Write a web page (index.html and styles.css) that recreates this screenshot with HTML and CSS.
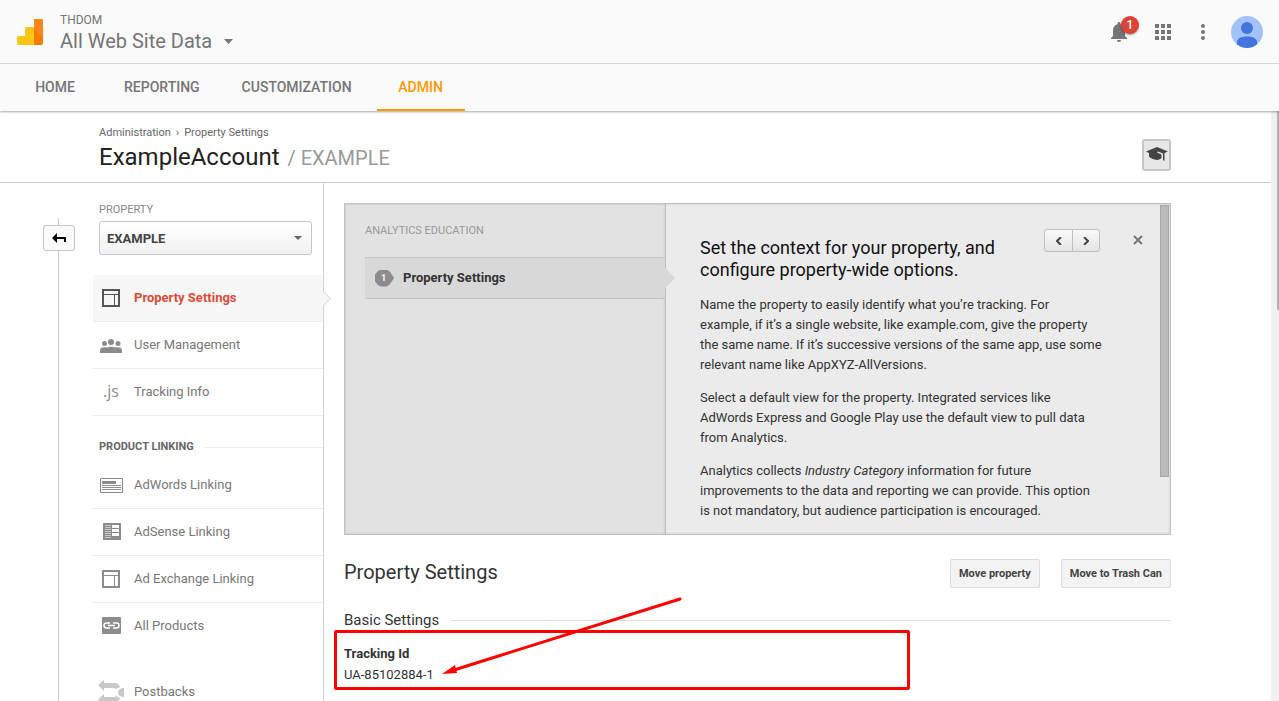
FILE: index.html
```html
<!DOCTYPE html>
<html lang="en">
<head>
<meta charset="utf-8">
<title>Property Settings</title>
<meta name="viewport" content="width=device-width, initial-scale=1">
<link rel="stylesheet" href="styles.css">
</head>
<body>
<header class="topbar">
  <svg class="logo" width="26" height="26" viewBox="0 0 26 26" aria-hidden="true">
    <path d="M17 0h7a2 2 0 0 1 2 2v22a2 2 0 0 1-2 2h-7z" fill="#f57c00"/>
    <path d="M17 2a2 2 0 0 1 2-2h5a2 2 0 0 1 2 2v16l-9-8z" fill="#f9851b"/>
    <path d="M17 8v18H2a2 2 0 0 1-2-2v-5a2 2 0 0 1 2-2h6v-7a2 2 0 0 1 2-2z" fill="#ffc517"/>
  </svg>
  <div class="view">
    <div class="view-account">THDOM</div>
    <button class="view-picker" type="button">All Web Site Data
      <svg width="9" height="5" viewBox="0 0 9 5" aria-hidden="true"><path d="M0 0h9L4.500 5z" fill="#757575"/></svg>
    </button>
  </div>
  <div class="tools">
    <button class="tool bell" type="button" aria-label="Notifications">
      <svg width="16" height="20" viewBox="0 0 16 20" aria-hidden="true"><path d="M8 0c-.9 0-1.500.7-1.500 1.500v.8C3.700 3 2 5.500 2 8.500V14l-2 2v1h16v-1l-2-2V8.500c0-3-1.700-5.500-4.500-6.200v-.8C9.500.7 8.900 0 8 0zM6 18a2 2 0 0 0 4 0z" fill="#757575"/></svg>
      <span class="badge">1</span>
    </button>
    <button class="tool" type="button" aria-label="Apps">
      <svg width="16" height="16" viewBox="0 0 16 16" aria-hidden="true"><path d="M0 0h4v4H0zM6 0h4v4H6zM12 0h4v4h-4zM0 6h4v4H0zM6 6h4v4H6zM12 6h4v4h-4zM0 12h4v4H0zM6 12h4v4H6zM12 12h4v4h-4z" fill="#757575"/></svg>
    </button>
    <button class="tool" type="button" aria-label="More">
      <svg width="4" height="16" viewBox="0 0 4 16" aria-hidden="true"><g fill="#757575"><circle cx="2" cy="2" r="2"/><circle cx="2" cy="8" r="2"/><circle cx="2" cy="14" r="2"/></g></svg>
    </button>
    <button class="tool" type="button" aria-label="Profile">
      <svg width="32" height="32" viewBox="0 0 32 32" aria-hidden="true"><circle cx="16" cy="16" r="16" fill="#a1c2fa"/><circle cx="16" cy="12" r="6" fill="#4274e0"/><path d="M6 28.500C5 23 9 20.500 16 20.500s11 2.500 10 8A16 16 0 0 1 6 28.500z" fill="#4274e0"/></svg>
    </button>
  </div>
</header>
<nav class="tabs">
  <a class="tab" href="#">HOME</a>
  <a class="tab" href="#">REPORTING</a>
  <a class="tab" href="#">CUSTOMIZATION</a>
  <a class="tab tab-active" href="#">ADMIN</a>
</nav>
<div class="viewport">
  <div class="page">
    <div class="page-head">
      <div>
        <div class="crumbs"><a href="#">Administration</a><span>›</span><a href="#">Property Settings</a></div>
        <h1 class="title">ExampleAccount <span class="title-sub">/ EXAMPLE</span></h1>
      </div>
      <button class="learn" type="button" aria-label="Analytics education">
        <svg width="22" height="14" viewBox="0 0 22 14" aria-hidden="true"><path d="M11 0L0 4.500L3 6v3.500C5 12 8 12.500 11 13c2-.3 3.500-1 4.500-2V7.500L11 5.500 12 4.500l5 2V13.500h1.500V6L22 4.500z" fill="#444"/></svg>
      </button>
    </div>
    <div class="columns">
      <div class="rail">
        <button class="rail-back" type="button" aria-label="Back">
          <svg width="14" height="10" viewBox="0 0 14 10" aria-hidden="true"><path d="M0 5l5-5v4h9v5h-2V6H5v4z" fill="#000"/></svg>
        </button>
      </div>
      <aside class="sidebar">
        <label class="prop-label" for="property">PROPERTY</label>
        <div class="prop-select">
          <select id="property"><option>EXAMPLE</option></select>
          <svg width="8" height="4" viewBox="0 0 8 4" aria-hidden="true"><path d="M0 0h8L4 4z" fill="#666"/></svg>
        </div>
        <a class="item item-active" href="#">
          <svg class="ico" width="26" height="24" viewBox="0 0 26 24" aria-hidden="true"><path d="M5 8.500h16M16.500 8v11" fill="none" stroke="#555" stroke-width="1"/><path d="M5 4h16v16H5z" fill="none" stroke="#555" stroke-width="2"/></svg>
          Property Settings</a>
        <a class="item" href="#">
          <svg class="ico" width="26" height="24" viewBox="0 0 26 24" aria-hidden="true"><g fill="#8c8c8c"><circle cx="6.500" cy="10.500" r="2.500"/><circle cx="13" cy="9" r="3"/><circle cx="20" cy="10.500" r="2.500"/><path d="M2 20v-3c0-2.500 4-3 7-2.500 2-1 6-1 8 0 3-.5 7 0 7 2.500v3z"/></g></svg>
          User Management</a>
        <a class="item" href="#"><span class="ico ico-js">.js</span>Tracking Info</a>
        <h2 class="group">PRODUCT LINKING</h2>
        <a class="item" href="#">
          <svg class="ico" width="26" height="24" viewBox="0 0 26 24" aria-hidden="true"><path d="M2.500 5.500h22v14h-22z" fill="none" stroke="#8c8c8c"/><path d="M4 8h14v3H4zM4 12h19v1H4zM4 14h19v1H4zM4 16h19v1H4z" fill="#8c8c8c"/></svg>
          AdWords Linking</a>
        <a class="item" href="#">
          <svg class="ico" width="26" height="24" viewBox="0 0 26 24" aria-hidden="true"><path d="M5 3h18v17H5z" fill="#8c8c8c"/><path d="M14 5h7v3h-7zM14 9h7v3h-7zM14 13h7v3h-7z" fill="#fff"/><path d="M7 5h6v1H7zM7 7h6v1H7zM7 9h6v1H7zM7 11h6v1H7zM7 13h6v1H7zM7 15h6v1H7zM7 17h6v1H7z" fill="#c8c8c8"/></svg>
          AdSense Linking</a>
        <a class="item" href="#">
          <svg class="ico" width="26" height="24" viewBox="0 0 26 24" aria-hidden="true"><path d="M5 8.500h16M16.500 8v11" fill="none" stroke="#8c8c8c" stroke-width="1"/><path d="M5 4h16v16H5z" fill="none" stroke="#8c8c8c" stroke-width="2"/></svg>
          Ad Exchange Linking</a>
        <a class="item item-last" href="#">
          <svg class="ico" width="26" height="24" viewBox="0 0 26 24" aria-hidden="true"><rect x="4" y="3" width="19" height="17" rx="1" fill="#8c8c8c"/><path d="M12 9H8.500a2.500 2.500 0 0 0 0 5H12M15 9h3.500a2.500 2.500 0 0 1 0 5H15M10 11.500h7" fill="none" stroke="#fff" stroke-width="1.500"/></svg>
          All Products</a>
        <a class="item item-last" href="#">
          <svg class="ico" width="26" height="24" viewBox="0 0 26 24" aria-hidden="true"><g fill="#c8c8c8"><path d="M0 5L6 0v3h11c3 0 4 2 5 4l-4 2-2-1H6v3z"/><path d="M0 19.500L6 14v3h10l2-1 4 2c-1 2-2 4-5 4H6v3z"/><path d="M26 8v9c-3 0-6-1.500-6-4.500S23 8 26 8z"/></g></svg>
          Postbacks</a>
      </aside>
      <main class="content">
        <section class="edu">
          <div class="edu-nav">
            <h2 class="edu-label">ANALYTICS EDUCATION</h2>
            <a class="edu-step" href="#">
              <span class="step-num">1</span>Property Settings</a>
          </div>
          <div class="edu-body">
            <div class="edu-top">
              <h3 class="edu-title">Set the context for your property, and configure property-wide options.</h3>
              <div class="edu-pager">
                <button type="button" aria-label="Previous"><svg width="6" height="8" viewBox="0 0 6 8" aria-hidden="true"><path d="M5 0L1 4l4 4" fill="none" stroke="#444" stroke-width="2"/></svg></button>
                <button type="button" aria-label="Next"><svg width="6" height="8" viewBox="0 0 6 8" aria-hidden="true"><path d="M1 0l4 4-4 4" fill="none" stroke="#444" stroke-width="2"/></svg></button>
              </div>
              <button class="edu-close" type="button" aria-label="Close"><svg width="10" height="10" viewBox="0 0 10 10" aria-hidden="true"><path d="M1 1l8 8M9 1L1 9" stroke="#777" stroke-width="2"/></svg></button>
            </div>
            <p>Name the property to easily identify what you’re tracking. For example, if it’s a single website, like example.com, give the property the same name. If it’s successive versions of the same app, use some relevant name like AppXYZ-AllVersions.</p>
            <p>Select a default view for the property. Integrated services like AdWords Express and Google Play use the default view to pull data from Analytics.</p>
            <p>Analytics collects <em>Industry Category</em> information for future improvements to the data and reporting we can provide. This option is not mandatory, but audience participation is encouraged.</p>
          </div>
          <div class="edu-scroll"></div>
        </section>
        <div class="section-head">
          <h2>Property Settings</h2>
          <button type="button">Move property</button>
          <button type="button">Move to Trash Can</button>
        </div>
        <h3 class="subhead">Basic Settings</h3>
        <div class="tracking">
          <div class="tracking-label">Tracking Id</div>
          <div>UA-85102884-1</div>
          <svg class="arrow" width="242" height="84" viewBox="0 0 242 84" aria-hidden="true"><path d="M12 75L238 4" stroke="#f00" stroke-width="3" stroke-linecap="round"/><path d="M0 79l13-9 2 8z" fill="#f00"/></svg>
        </div>
      </main>
    </div>
  </div>
  <div class="scrollbar"></div>
</div>
</body>
</html>
```
FILE: styles.css
```css
* { box-sizing: border-box; }
body {
  margin: 0;
  height: 100vh;
  display: flex;
  flex-direction: column;
  overflow: hidden;
  background: #fff;
  color: #333;
  font: 13px/20px Roboto, "Liberation Sans", sans-serif;
}
h1, h2, h3, p { margin: 0; font-weight: 400; }
a { color: inherit; text-decoration: none; }
button { margin: 0; padding: 0; border: 0; background: none; color: inherit; font: inherit; cursor: pointer; }
svg { display: block; flex: none; }

.topbar {
  flex: none;
  height: 64px;
  display: flex;
  align-items: center;
  padding: 0 16px 0 17px;
  border-bottom: 1px solid #dcdcdc;
  background: #fafafa;
  color: #757575;
}
.view { margin-left: 17px; padding-top: 3px; }
.view-account { font-size: 12px; line-height: 16px; }
.view-picker { display: flex; align-items: center; gap: 12px; font-size: 20px; line-height: 26px; }
.tools { margin-left: auto; display: flex; align-items: center; }
.tool { display: flex; justify-content: center; min-width: 40px; }
.tool:last-child { margin-left: 8px; min-width: 32px; }
.bell { position: relative; margin-right: 4px; }
.badge {
  position: absolute;
  top: -6px;
  right: 0;
  width: 18px;
  height: 18px;
  border-radius: 50%;
  background: #db4437;
  box-shadow: 0 1px 2px rgba(0, 0, 0, .4);
  color: #fff;
  font-size: 12px;
  font-weight: 500;
  line-height: 18px;
}

.tabs {
  flex: none;
  position: relative;
  z-index: 1;
  height: 47px;
  display: flex;
  gap: 8px;
  padding-left: 11px;
  background: #fafafa;
  box-shadow: 0 1px 2px rgba(0, 0, 0, .35);
  color: #757575;
  font-size: 14px;
  font-weight: 500;
}
.tab {
  min-width: 88px;
  padding: 0 17px;
  line-height: 47px;
  text-align: center;
}
.tab-active { border-bottom: 2px solid #ff9800; color: #ff9800; }

.viewport { flex: 1; min-height: 0; display: flex; }
.page { flex: 1; min-width: 0; display: flex; flex-direction: column; overflow: hidden; }
.scrollbar { width: 8px; background: linear-gradient(#b0b0b0, #b0b0b0) right top / 2px 199px no-repeat #f1f1f1; }

.page-head {
  flex: none;
  height: 72px;
  display: flex;
  justify-content: space-between;
  align-items: flex-end;
  padding: 0 100px 8px 99px;
  border-bottom: 1px solid #ccc;
}
.crumbs { display: flex; gap: 5px; color: #666; font-size: 11px; line-height: 16px; }
.title { color: #222; font-size: 24px; line-height: 32px; }
.title-sub { color: #999; font-size: 20px; margin-left: 2px; }
.learn {
  display: flex;
  justify-content: center;
  margin-bottom: 3px;
  padding: 6px 1px 10px;
  width: 29px;
  height: 32px;
  border: 2px solid #c6c6c6;
  border-radius: 3px;
  background: #e6e6e6;
}

.columns { flex: 1; min-height: 0; display: flex; }
.rail {
  flex: none;
  width: 32px;
  margin: 35px 18px 0 43px;
  padding-top: 7px;
  background: linear-gradient(#ccc, #ccc) 15px 0 / 1px 100% no-repeat;
}
.rail-back {
  display: flex;
  align-items: center;
  justify-content: center;
  width: 32px;
  height: 26px;
  border: 1px solid #c6c6c6;
  border-radius: 3px;
  background: #fafafa;
}
.sidebar { flex: none; width: 231px; border-right: 1px solid #d4d4d4; }
.prop-label { display: block; margin: 19px 0 3px 6px; color: #888; font-size: 11px; line-height: 16px; }
.prop-select { display: flex; align-items: center; margin: 0 11px 20px 6px; }
.prop-select select {
  appearance: none;
  flex: 1;
  height: 34px;
  padding: 0 7px;
  border: 1px solid #c6c6c6;
  border-radius: 3px;
  background: linear-gradient(#fff, #f1f1f1);
  color: #444;
  font: 700 13px Roboto, "Liberation Sans", sans-serif;
}
.prop-select svg { margin-left: -18px; margin-right: 10px; pointer-events: none; }
.item {
  position: relative;
  display: flex;
  align-items: center;
  gap: 10px;
  height: 47px;
  padding-left: 5px;
  border-bottom: 1px solid #ededed;
  color: #777;
}
.item-active { background: #f7f7f7; color: #dd4b39; font-weight: 700; }
.item-active::after {
  content: "";
  position: absolute;
  right: -6px;
  top: 18px;
  width: 10px;
  height: 10px;
  border: solid #ddd;
  border-width: 1px 1px 0 0;
  background: #f7f7f7;
  transform: rotate(45deg);
}
.item-last { height: 46px; margin-bottom: 20px; border-bottom: 0; }
.ico { flex: none; width: 26px; }
.ico-js { padding: 0 0 3px 5px; color: #8c8c8c; font: 16px/20px "Open Sans", sans-serif; }
.group {
  display: flex;
  align-items: center;
  gap: 10px;
  height: 30px;
  margin: 16px 0 0;
  padding-left: 6px;
  color: #666;
  font-size: 11px;
  font-weight: 700;
}
.group::after, .subhead::after { content: ""; flex: 1; border-top: 1px solid #ededed; }

.content { flex: 1; min-width: 0; padding: 20px 100px 0 20px; }
.edu {
  display: flex;
  height: 332px;
  overflow: hidden;
  border: 1px solid #c0c0c0;
  background: #ebebeb;
  box-shadow: inset 0 0 3px rgba(0, 0, 0, .15);
}
.edu-nav {
  flex: none;
  width: 321px;
  padding: 19px 0 0 20px;
  border-right: 1px solid #c0c0c0;
  background: #e2e2e2;
  box-shadow: inset 0 0 3px rgba(0, 0, 0, .15);
}
.edu-label { color: #999; font-size: 11px; line-height: 16px; }
.edu-step {
  position: relative;
  display: flex;
  align-items: center;
  gap: 9px;
  height: 42px;
  margin-top: 18px;
  padding-left: 10px;
  border: solid #c4c4c4;
  border-width: 1px 0;
  background: #d8d8d8;
  font-weight: 700;
}
.edu-step::after {
  content: "";
  position: absolute;
  left: 100%;
  top: 10px;
  border: solid transparent;
  border-width: 10px 0 10px 10px;
  border-left-color: #d8d8d8;
}
.step-num {
  width: 19px;
  height: 17px;
  padding-right: 2px;
  background: #8c8c8c;
  clip-path: polygon(0 30%, 15% 10%, 30% 0, 62% 0, 80% 15%, 100% 50%, 80% 85%, 62% 100%, 30% 100%, 15% 90%, 0 70%);
  color: #fff;
  font-size: 9px;
  line-height: 16px;
  text-align: center;
}
.edu-body { flex: 1; min-width: 0; padding: 25px 12px 0 34px; }
.edu-top { display: flex; align-items: flex-start; margin-bottom: 14px; }
.edu-title { flex: 0 1 310px; padding-top: 8px; color: #111; font-size: 18px; line-height: 22px; }
.edu-pager { display: flex; margin-left: auto; border: 1px solid #c0c0c0; border-radius: 3px; background: linear-gradient(#fafafa, #e4e4e4); }
.edu-pager button { display: flex; align-items: center; justify-content: center; width: 27px; height: 21px; }
.edu-pager button + button { border-left: 1px solid #c0c0c0; }
.edu-close { display: flex; margin: 6px 0 0 33px; padding-right: 5px; }
.edu-body p { margin-bottom: 13px; max-width: 402px; }
.edu-scroll { flex: none; width: 9px; height: 272px; margin: 1px 1px 0 0; border: 1px solid #a8a8a8; background: #bababa; }

.section-head { display: flex; align-items: flex-start; gap: 21px; margin-top: 24px; }
.section-head h2 { margin-right: auto; font-size: 20px; line-height: 26px; }
.section-head button {
  height: 29px;
  padding: 0 8px;
  border: 1px solid #dcdcdc;
  border-radius: 2px;
  background: #f3f3f3;
  color: #444;
  font-size: 11px;
  font-weight: 700;
}
.subhead { display: flex; align-items: center; gap: 12px; margin-top: 22px; font-size: 15px; line-height: 20px; }
.subhead::after { border-color: #e0e0e0; }
.tracking {
  position: relative;
  max-width: 576px;
  margin-left: -10px;
  padding: 11px 7px 2px;
  border: 3px solid #f00;
  border-radius: 2px;
}
.tracking-label { margin-bottom: 1px; font-weight: 700; }
.arrow { position: absolute; left: 105px; top: -38px; }
```
